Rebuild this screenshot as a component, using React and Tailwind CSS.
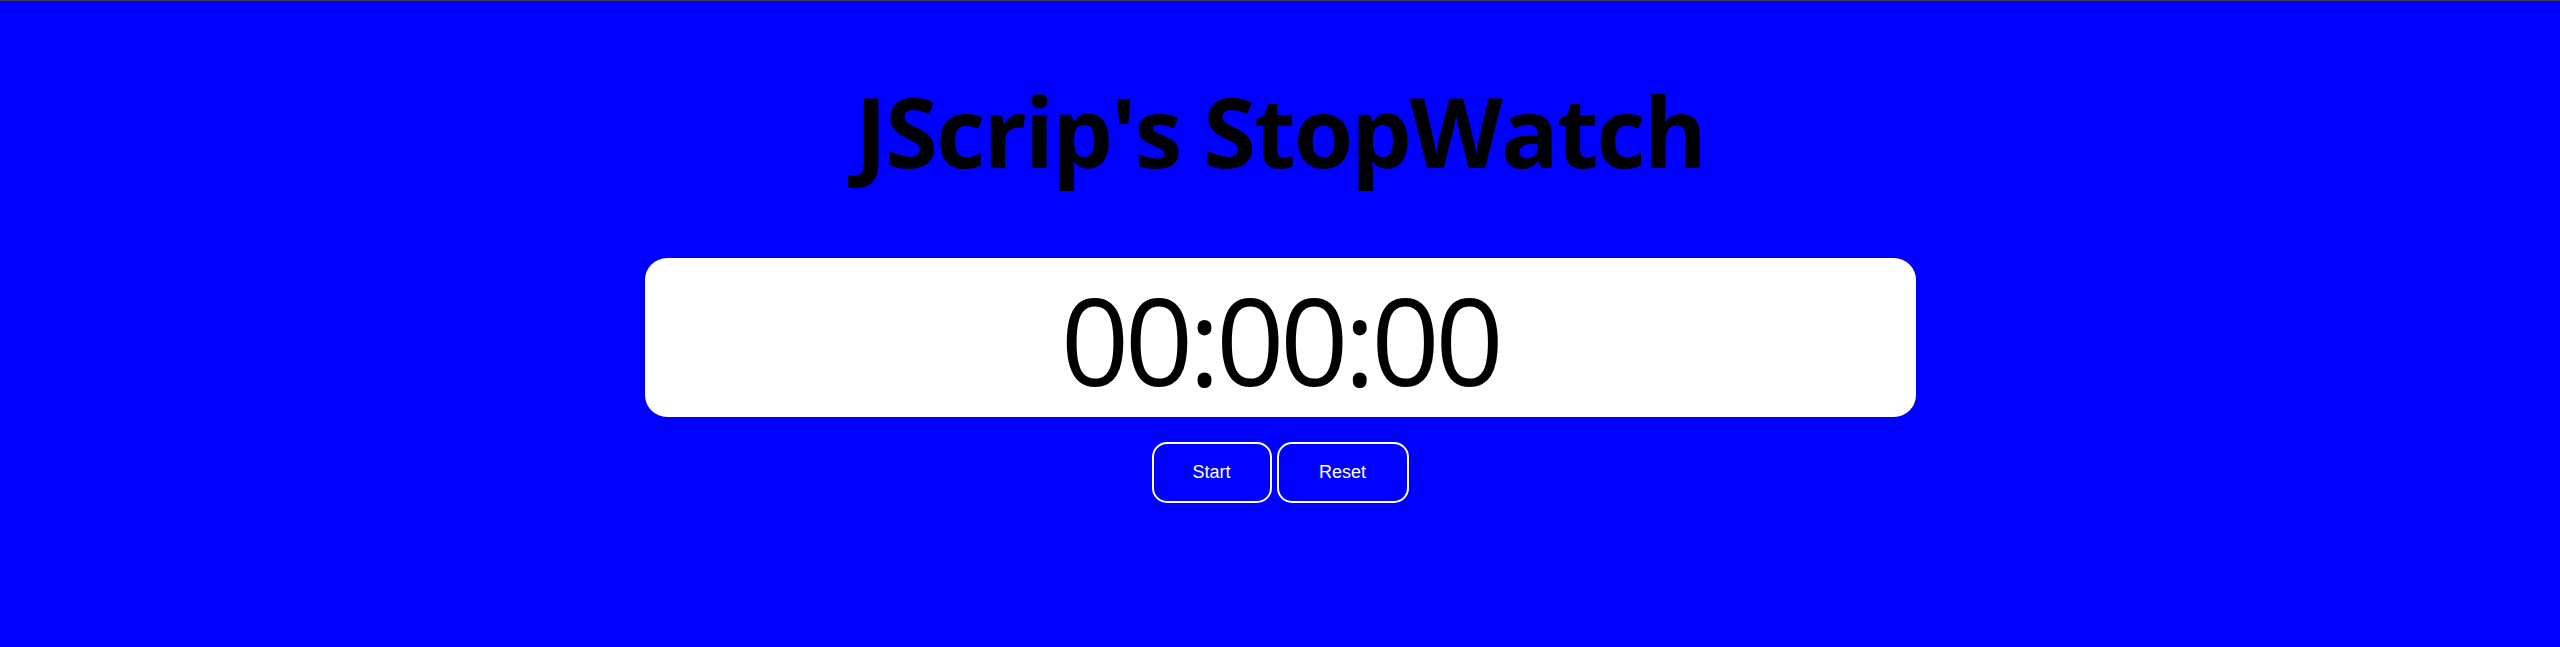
export default function App() {
  return (
    <div className="min-h-[647px] bg-[#0000ff] border-t border-[#404040] flex flex-col items-center">
      <h1 className="mt-[82px] h-[96px] leading-none text-[96px] font-bold text-black text-center tracking-[-2px] font-['Open_Sans','Noto_Sans',sans-serif]">
        JScrip's StopWatch
      </h1>
      <div className="mt-[79px] w-[1271px] h-[159px] bg-white rounded-[22px] flex justify-center pt-[22px]">
        <div className="leading-none text-[120px] text-black tracking-[-4.5px] font-['Open_Sans','Noto_Sans',sans-serif]">
          00:00:00
        </div>
      </div>
      <div className="mt-[25px] flex gap-[5px] font-['Liberation_Sans',Arial,sans-serif]">
        <button className="w-[120px] h-[61px] border-2 border-white rounded-[15px] text-white text-[18px] bg-transparent">
          Start
        </button>
        <button className="w-[132px] h-[61px] border-2 border-white rounded-[15px] text-white text-[18px] bg-transparent">
          Reset
        </button>
      </div>
    </div>
  );
}
